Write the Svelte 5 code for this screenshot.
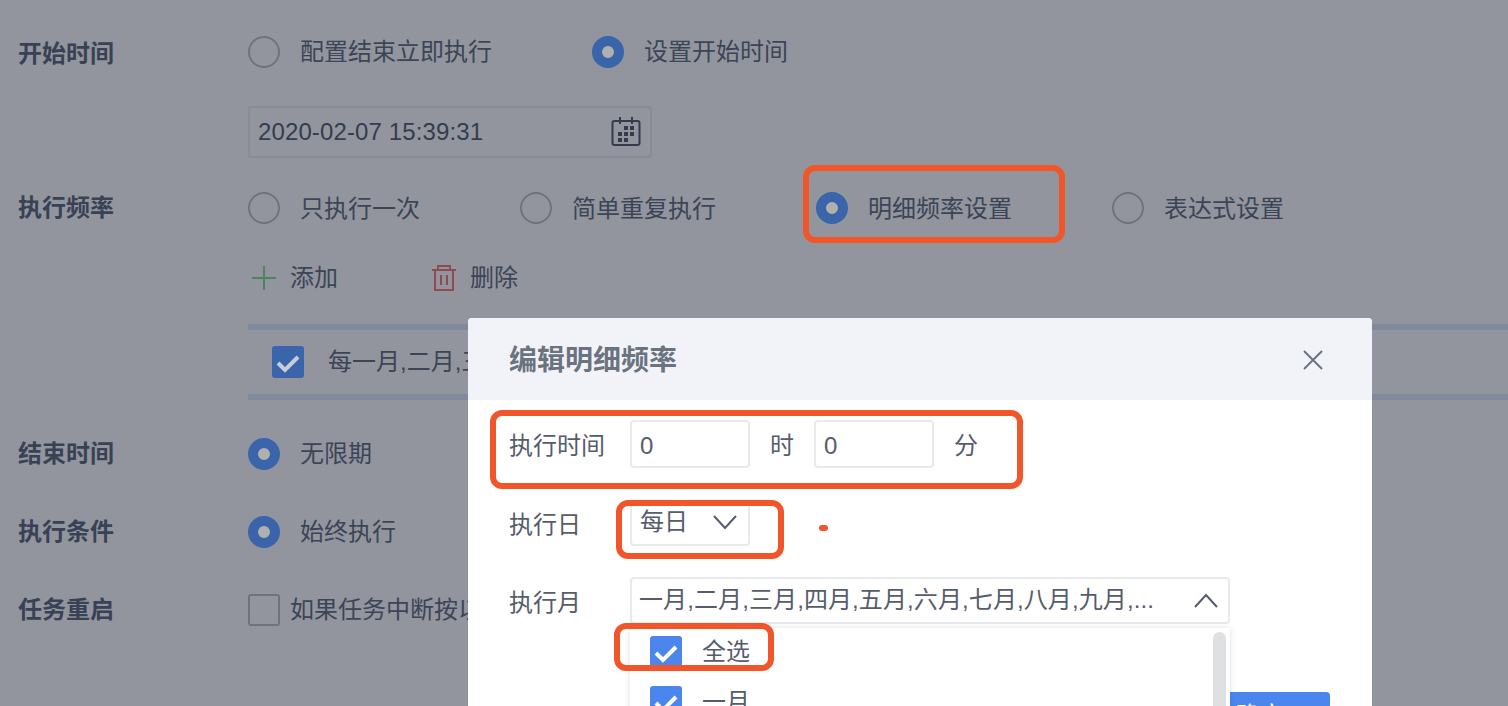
<script>
  const startOptions = [
    { label: '配置结束立即执行', on: false },
    { label: '设置开始时间', on: true }
  ];
  const freqOptions = [
    { label: '只执行一次', on: false },
    { label: '简单重复执行', on: false },
    { label: '明细频率设置', on: true },
    { label: '表达式设置', on: false }
  ];
  const days = [
    [620, 134], [626, 128], [632, 128], [626, 134], [632, 134], [620, 140], [626, 140]
  ];
  const months = ['全选', '一月', '二月'];
</script>

<div class="stage">
  <main class="page">
    <section class="row first">
      <h3 class="label">开始时间</h3>
      <div class="options">
        {#each startOptions as o}
          <span class="opt"><i class="radio" class:on={o.on}></i><span>{o.label}</span></span>
        {/each}
      </div>
    </section>

    <div class="date">
      <span>2020-02-07 15:39:31</span>
      <svg class="cal" width="30" height="32" viewBox="611 116 30 32">
        <rect x="612.5" y="121" width="27" height="24" rx="2" fill="none" stroke="#333b4d" stroke-width="2"/>
        <path d="M620 117v7M632 117v7" stroke="#333b4d" stroke-width="2" fill="none"/>
        {#each days as d}
          <rect x={d[0] - 2} y={d[1] - 2} width="4" height="4" fill="#333b4d"/>
        {/each}
      </svg>
    </div>

    <section class="row freq">
      <h3 class="label">执行频率</h3>
      <div class="options">
        {#each freqOptions as o}
          <span class="opt"><i class="radio" class:on={o.on}></i><span>{o.label}</span></span>
        {/each}
      </div>
    </section>

    <div class="tools">
      <span class="tool add">
        <svg width="24" height="24" viewBox="0 0 24 24"><path d="M12 0v24M0 12h24" stroke="#4a8560" stroke-width="2" fill="none"/></svg>
        添加
      </span>
      <span class="tool del">
        <svg width="24" height="28" viewBox="0 0 24 28">
          <path d="M0 6h24M6 6V2h12v4M3 6v20h18V6M9 11v10M15 11v10" stroke="#8f4a52" stroke-width="2" fill="none"/>
        </svg>
        删除
      </span>
    </div>

    <div class="table">
      <i class="check dim">
        <svg width="32" height="32" viewBox="0 0 32 32"><path d="M6 17l7 7L26 11" stroke="#c9cdd8" stroke-width="4" fill="none"/></svg>
      </i>
      <span>每一月,二月,三月,四月,五月,六月,七月,八月,九月</span>
    </div>

    <section class="row end">
      <h3 class="label">结束时间</h3>
      <div class="options"><span class="opt"><i class="radio on"></i><span>无限期</span></span></div>
    </section>
    <section class="row cond">
      <h3 class="label">执行条件</h3>
      <div class="options"><span class="opt"><i class="radio on"></i><span>始终执行</span></span></div>
    </section>
    <section class="row restart">
      <h3 class="label">任务重启</h3>
      <span class="restart-opt"><i class="box"></i>如果任务中断按以下设置重启</span>
    </section>
  </main>

  <div class="modal">
    <header class="modal-head">
      <h2>编辑明细频率</h2>
      <svg width="22" height="22" viewBox="0 0 22 22"><path d="M2 2l18 18M20 2L2 20" stroke="#6c7380" stroke-width="2" fill="none"/></svg>
    </header>
    <div class="modal-body">
      <div class="m-row time">
        <span class="m-label">执行时间</span>
        <span class="input">0</span>
        <span class="unit">时</span>
        <span class="input">0</span>
        <span class="unit">分</span>
      </div>
      <div class="m-row day">
        <span class="m-label">执行日</span>
        <span class="input select">
          每日
          <svg width="24" height="16" viewBox="0 0 24 16"><path d="M1 2l11 12L23 2" stroke="#555c6b" stroke-width="2" fill="none"/></svg>
        </span>
      </div>
      <div class="m-row month">
        <span class="m-label">执行月</span>
        <div class="month-field">
          <span class="input select wide">
            一月,二月,三月,四月,五月,六月,七月,八月,九月,...
            <svg width="24" height="16" viewBox="0 0 24 16"><path d="M1 14L12 2l11 12" stroke="#555c6b" stroke-width="2" fill="none"/></svg>
          </span>
          <div class="dropdown">
            {#each months as m}
              <div class="item">
                <i class="check">
                  <svg width="32" height="32" viewBox="0 0 32 32"><path d="M6 17l7 7L26 11" stroke="#fff" stroke-width="4" fill="none"/></svg>
                </i>
                {m}
              </div>
            {/each}
            <i class="scroll"></i>
          </div>
        </div>
      </div>
      <div class="footer"><button class="ok">确定</button></div>
    </div>
  </div>

  <i class="mark m1"></i>
  <i class="mark m2"></i>
  <i class="mark m3"></i>
  <i class="mark m4"></i>
  <i class="dot"></i>
</div>

<style>
  :global(body) {
    margin: 0;
  }
  .stage {
    position: relative;
    width: 1508px;
    height: 706px;
    overflow: hidden;
    background: #92959e;
    color: #3c4456;
    font: 24px/1.2 "Liberation Sans", "Noto Sans CJK SC", sans-serif;
  }
  i {
    display: block;
    flex: none;
    box-sizing: border-box;
  }
  .page {
    padding: 28px 0 0 18px;
  }
  .row {
    display: flex;
    align-items: center;
    height: 48px;
  }
  .freq { margin-top: 26px; }
  .end { margin-top: 30px; }
  .cond { margin-top: 30px; }
  .restart { margin-top: 30px; }
  .label {
    width: 230px;
    margin: 0;
    font-size: 24px;
    font-weight: 700;
    color: #394254;
  }
  .first .label {
    margin-top: 4px;
  }
  .options {
    display: flex;
    gap: 100px;
  }
  .opt {
    display: flex;
    align-items: center;
    gap: 20px;
  }
  .freq .opt span {
    margin-top: 2px;
  }
  .radio {
    width: 32px;
    height: 32px;
    border: 2px solid #6f737d;
    border-radius: 50%;
  }
  .radio.on {
    border: 10px solid #3a65ab;
    background: #b0b0ae;
  }
  .date {
    display: flex;
    align-items: center;
    justify-content: space-between;
    box-sizing: border-box;
    width: 404px;
    height: 52px;
    margin: 30px 0 0 230px;
    padding: 0 9px 0 8px;
    border: 2px solid #878b95;
    border-radius: 4px;
    color: #343c4e;
    letter-spacing: 0.12px;
  }
  .tools {
    display: flex;
    align-items: center;
    height: 48px;
    margin: 22px 0 0 234px;
  }
  .tool {
    display: flex;
    align-items: center;
  }
  .add { gap: 14px; }
  .del { gap: 14px; margin-left: 94px; }
  .table {
    display: flex;
    align-items: center;
    gap: 24px;
    height: 64px;
    margin: 22px 0 0 230px;
    padding-left: 24px;
    border-top: 6px solid #808a9a;
    border-bottom: 6px solid #808a9a;
    white-space: nowrap;
  }
  .check {
    width: 32px;
    height: 32px;
    border-radius: 3px;
    background: #4a86ee;
  }
  .check.dim {
    background: #3a65ab;
  }
  .check svg {
    display: block;
  }
  .restart-opt {
    display: flex;
    align-items: center;
    gap: 10px;
    white-space: nowrap;
  }
  .box {
    width: 32px;
    height: 32px;
    border: 2px solid #6f737d;
    border-radius: 3px;
  }
  .modal {
    position: absolute;
    isolation: isolate;
    left: 468px;
    top: 318px;
    width: 904px;
    height: 388px;
    border-radius: 4px 4px 0 0;
    overflow: hidden;
    background: #fff;
    color: #555c6b;
  }
  .modal-head {
    display: flex;
    align-items: center;
    justify-content: space-between;
    height: 82px;
    padding: 0 48px 0 41px;
    background: #f2f3f8;
  }
  .modal-head h2 {
    margin: 4px 0 0;
    font-size: 28px;
    font-weight: 700;
    color: #6c7380;
  }
  .modal-head svg {
    margin-top: 2px;
  }
  .modal-body {
    padding: 0 42px 0 41px;
  }
  .m-row {
    display: flex;
    align-items: center;
  }
  .time { margin-top: 20px; }
  .day { margin-top: 32px; }
  .month { margin-top: 31px; }
  .m-label {
    width: 121px;
    margin-top: 4px;
  }
  .month .m-label {
    margin-top: 5px;
  }
  .input {
    display: flex;
    align-items: center;
    box-sizing: border-box;
    width: 120px;
    height: 48px;
    padding: 4px 0 0 8px;
    border: 2px solid #e8eaee;
    border-radius: 4px;
  }
  .unit {
    width: 22px;
    margin: 4px 22px 0 20px;
  }
  .select {
    justify-content: space-between;
    height: 46px;
    padding: 0 11px 2px 8px;
  }
  .wide {
    width: 600px;
    height: 47px;
    padding: 0 10px 0 7px;
    letter-spacing: 0.1px;
    white-space: nowrap;
  }
  .month-field {
    position: relative;
  }
  .dropdown {
    position: absolute;
    top: 51px;
    left: 0;
    z-index: 1;
    box-sizing: border-box;
    width: 600px;
    height: 160px;
    padding-top: 8px;
    background: #fff;
    box-shadow: 0 0 6px rgba(60, 70, 90, 0.16);
  }
  .item {
    display: flex;
    align-items: center;
    gap: 20px;
    height: 32px;
    margin-bottom: 18px;
    padding-left: 20px;
  }
  .scroll {
    position: absolute;
    top: 4px;
    right: 4px;
    width: 13px;
    height: 150px;
    border-radius: 7px;
    background: #dfe0e2;
  }
  .footer {
    display: flex;
    justify-content: flex-end;
    margin-top: 68px;
  }
  .ok {
    width: 140px;
    height: 48px;
    border: 0;
    border-radius: 4px;
    background: #4a86ee;
    color: #fff;
    font: inherit;
  }
  .mark {
    position: absolute;
    box-sizing: border-box;
    border: 6px solid #f0562a;
    border-radius: 12px;
  }
  .m1 { left: 803px; top: 165px; width: 262px; height: 78px; }
  .m2 { left: 490px; top: 410px; width: 533px; height: 79px; }
  .m3 { left: 616px; top: 500px; width: 168px; height: 59px; }
  .m4 { left: 614px; top: 623px; width: 160px; height: 48px; }
  .dot {
    position: absolute;
    left: 819px;
    top: 525px;
    width: 9px;
    height: 6px;
    border-radius: 3px;
    background: #f0562a;
  }
</style>
